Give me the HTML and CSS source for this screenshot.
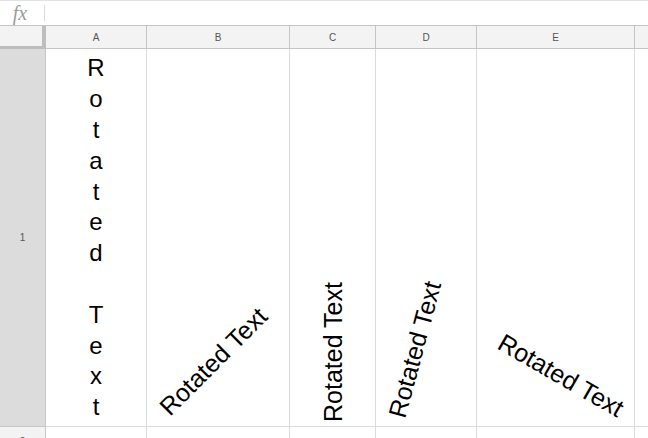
FILE: index.html
```html
<!DOCTYPE html>
<html>
<head>
<meta charset="utf-8">
<link rel="stylesheet" href="styles.css">
</head>
<body>
<div class="formula">
  <div class="fx">fx</div>
  <div class="fsep"></div>
  <div class="finput"></div>
</div>
<div class="grid">
  <div class="corner"></div>
  <div class="colhead">A</div>
  <div class="colhead">B</div>
  <div class="colhead">C</div>
  <div class="colhead">D</div>
  <div class="colhead">E</div>
  <div class="colhead last"></div>

  <div class="rowhead sel">1</div>
  <div class="cell stackcell">
    <div class="stack">
      <span>R</span><span>o</span><span>t</span><span>a</span><span>t</span><span>e</span><span>d</span><span>&nbsp;</span><span>T</span><span>e</span><span>x</span><span>t</span>
    </div>
  </div>
  <div class="cell"><span class="rot rb">Rotated Text</span></div>
  <div class="cell"><span class="rot rc">Rotated Text</span></div>
  <div class="cell"><span class="rot rd">Rotated Text</span></div>
  <div class="cell"><span class="rot re">Rotated Text</span></div>
  <div class="cell last"></div>

  <div class="rowhead">2</div>
  <div class="cell"></div>
  <div class="cell"></div>
  <div class="cell"></div>
  <div class="cell"></div>
  <div class="cell"></div>
  <div class="cell last"></div>
</div>
</body>
</html>
```
FILE: styles.css
```css
* { box-sizing: border-box; }
html, body {
  margin: 0;
  padding: 0;
  background: #fff;
  font-family: "Liberation Sans", Arial, sans-serif;
  overflow: hidden;
}
.formula {
  height: 26px;
  display: flex;
  align-items: center;
  border-top: 1px solid #e3e3e3;
  border-bottom: 1px solid #c4c4c4;
  background: #fff;
}
.fx {
  width: 44px;
  text-align: center;
  font-family: "Liberation Serif", "Times New Roman", serif;
  font-style: italic;
  font-size: 20px;
  color: #9a9a9a;
  padding-right: 4px;
  line-height: 20px;
}
.fsep {
  width: 1px;
  height: 16px;
  background: #dadada;
}
.finput { flex: 1; }

.grid {
  display: grid;
  grid-template-columns: 46px 101px 143px 86px 101px 158px 1fr;
  grid-template-rows: 23px 378px 30px;
}
.corner {
  background: #f3f3f3;
  border-right: 4px solid #bdbdbd;
  border-bottom: 3px solid #bdbdbd;
}
.colhead {
  background: #f3f3f3;
  border-right: 1px solid #c6c6c6;
  border-bottom: 1px solid #c6c6c6;
  font-size: 10px;
  color: #555;
  display: flex;
  align-items: center;
  justify-content: center;
}
.colhead.last { border-right: none; }
.rowhead {
  background: #f3f3f3;
  border-right: 1px solid #c6c6c6;
  border-bottom: 1px solid #c6c6c6;
  font-size: 10px;
  color: #555;
  display: flex;
  align-items: center;
  justify-content: center;
}
.rowhead.sel { background: #dcdcdc; }
.cell {
  border-right: 1px solid #dadada;
  border-bottom: 1px solid #dadada;
  display: flex;
  align-items: flex-end;
  justify-content: center;
  overflow: visible;
  min-width: 0;
}
.cell.last { border-right: none; }
.stackcell { padding-bottom: 3px; }
.stack {
  display: flex;
  flex-direction: column;
  align-items: center;
  font-size: 24px;
  line-height: 30.8px;
  color: #000;
}
.stack span { display: block; }
.rot {
  flex-shrink: 0;
  white-space: nowrap;
  font-size: 25px;
  line-height: 27px;
  color: #000;
  margin-bottom: 0;
}
.rb { transform: translate(-4.5px, -51px) rotate(-45deg); }
.rc { transform: translate(1px, -60.5px) rotate(-90deg); }
.rd { transform: translate(-11px, -63px) rotate(-75deg); }
.re { transform: translate(5px, -37px) rotate(30deg); }
```
